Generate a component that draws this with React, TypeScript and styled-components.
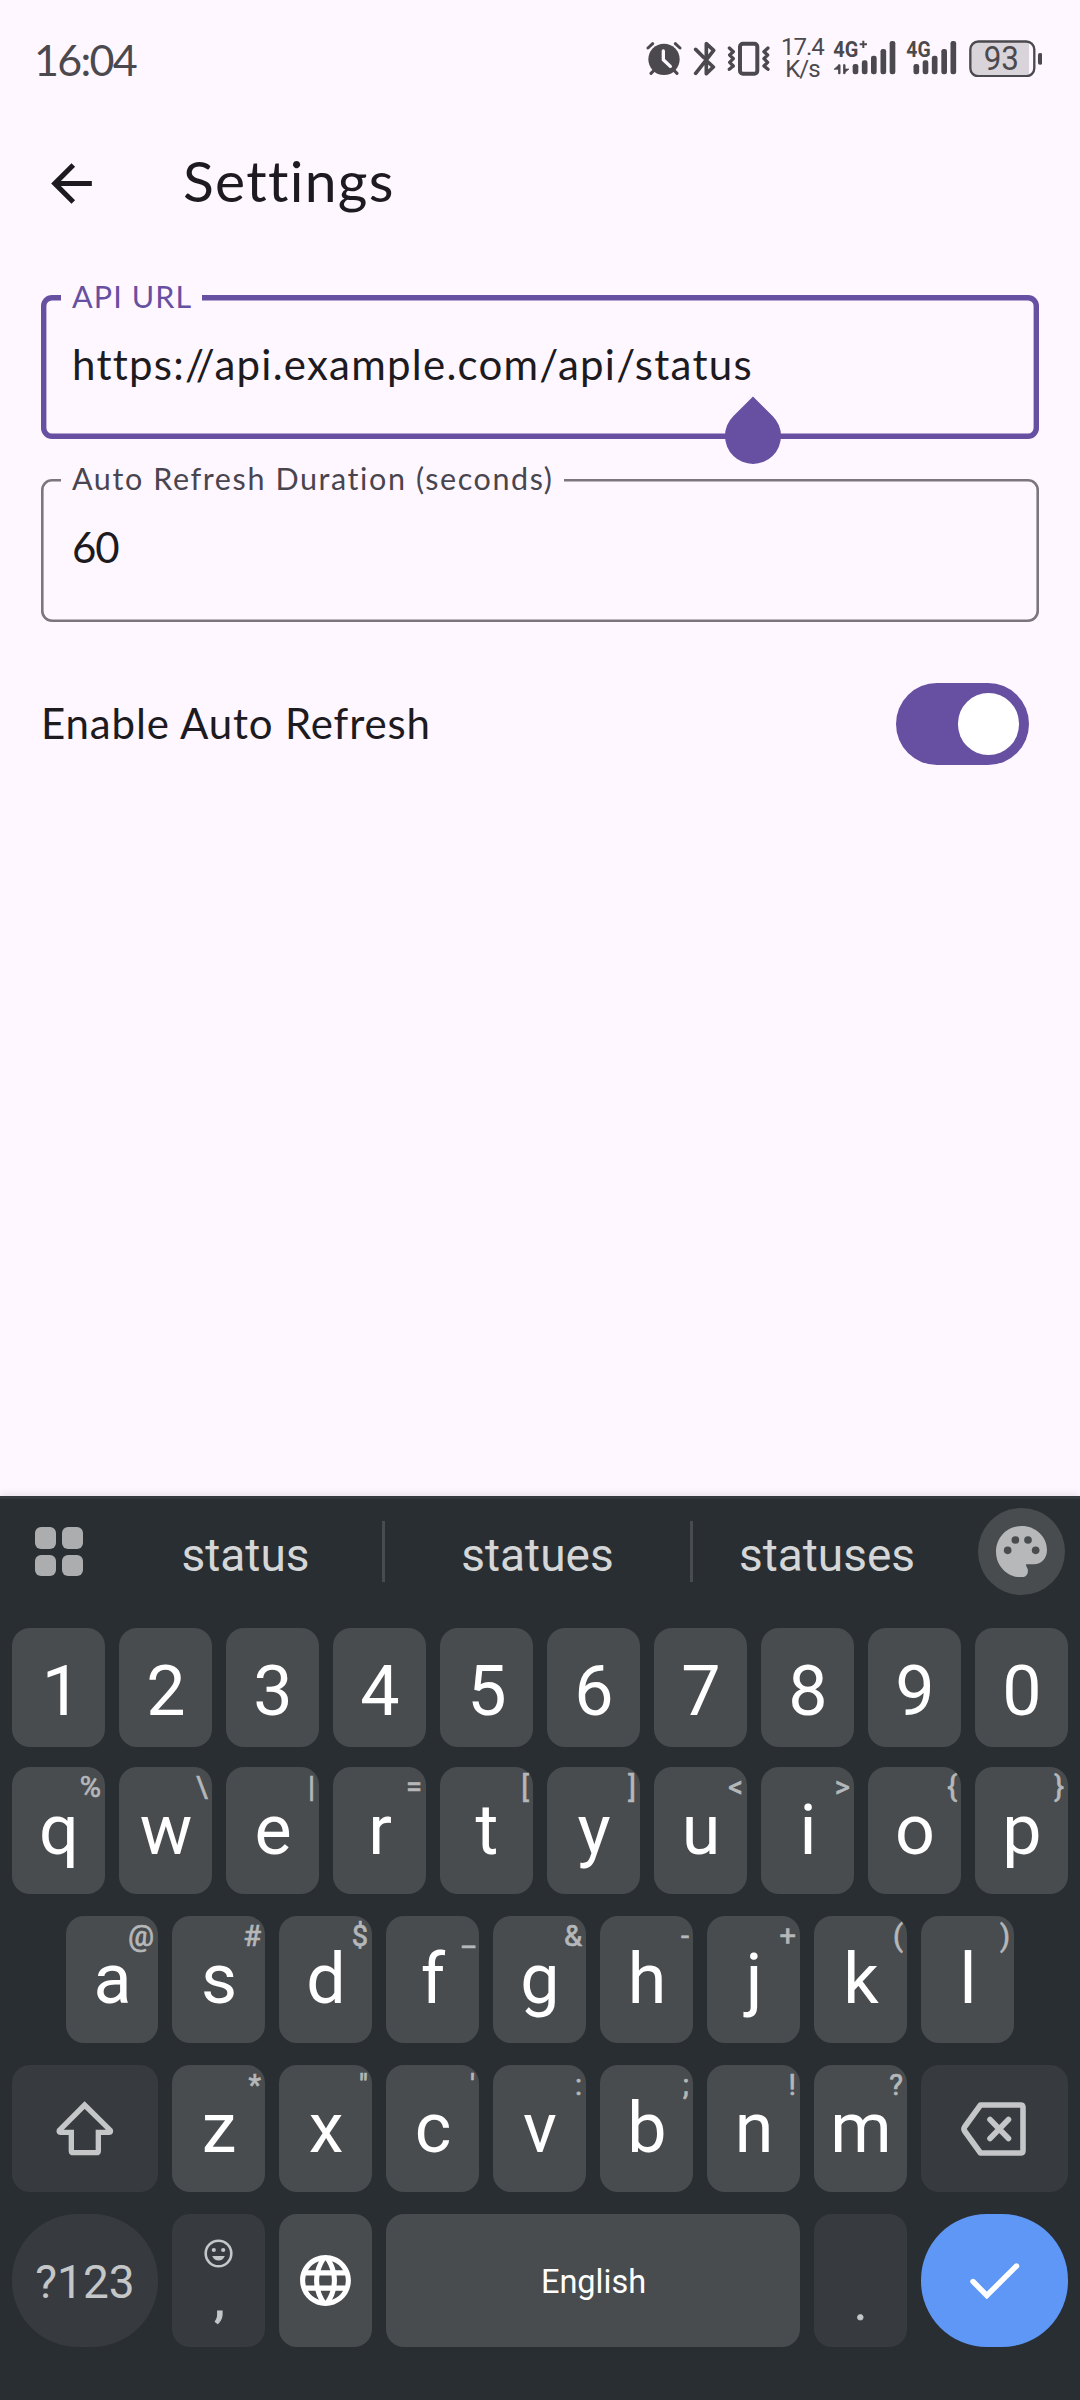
import React from 'react';
import styled, { createGlobalStyle, css } from 'styled-components';
import { MdLanguage } from 'react-icons/md';

const color = {
  surface: '#fef7ff',
  ink: '#1d1b20',
  muted: '#49454f',
  outline: '#7a757f',
  primary: '#6750a1',
  status: '#4b494d',
  board: '#292e32',
  key: '#484c4f',
  keyDark: '#373b3f',
  keyIcon: '#c4c6c8',
  enter: '#5f97f6',
};

const GlobalStyle = createGlobalStyle`
  *, *::before, *::after { box-sizing: border-box; }
  body { margin: 0; background: ${color.surface}; }
`;

const Screen = styled.div`
  display: flex;
  flex-direction: column;
  width: 1080px;
  height: 2400px;
  overflow: hidden;
  background: ${color.surface};
  font-family: Lato, 'Noto Sans', sans-serif;
  color: ${color.ink};
`;

/* ---------- status bar ---------- */

const StatusBar = styled.header`
  display: flex;
  align-items: center;
  justify-content: space-between;
  height: 117px;
  padding: 0 38px 0 34px;
  color: ${color.status};
`;

const Clock = styled.time`
  padding-top: 1px;
  font-size: 43px;
  line-height: 1;
  letter-spacing: -1.7px;
`;

const StatusIcons = styled.div`
  display: flex;
  align-items: center;
`;

const StatusGlyph = styled.svg<{ $gap?: number }>`
  display: block;
  flex: none;
  margin-left: ${(p) => p.$gap ?? 0}px;
  fill: none;
  stroke: currentColor;
  stroke-linecap: round;
  stroke-linejoin: round;

  text {
    font-family: Roboto, sans-serif;
    fill: currentColor;
    stroke: none;
  }
`;

const NetSpeed = styled.div`
  display: flex;
  flex-direction: column;
  align-items: center;
  width: 41px;
  margin-left: 12px;
  font-family: Roboto, sans-serif;
  font-size: 24px;
  line-height: 21.5px;
  letter-spacing: -1px;
  white-space: nowrap;
`;

/* ---------- app bar ---------- */

const AppBar = styled.div`
  display: flex;
  align-items: center;
  height: 133px;
  padding-left: 41px;
`;

const BackIcon = styled.svg`
  display: block;
  width: 61px;
  height: 61px;
  fill: ${color.ink};
`;

const Title = styled.h1`
  margin: 0 0 6px 81px;
  font-size: 57px;
  font-weight: 400;
  line-height: 1;
  letter-spacing: 1.3px;
`;

/* ---------- form ---------- */

const Form = styled.main`
  display: flex;
  flex-direction: column;
  flex: 1;
  padding: 45px 41px 0;
`;

const Field = styled.div<{ $focused?: boolean }>`
  position: relative;
  height: ${(p) => (p.$focused ? 144 : 143)}px;
  padding: 0 31px;
  border-radius: 11px;
  box-shadow: inset 0 0 0
    ${(p) => (p.$focused ? `5.4px ${color.primary}` : `2.6px ${color.outline}`)};

  & + & {
    margin-top: 40px;
  }
`;

const FieldLabel = styled.label<{ $focused?: boolean; $width: number }>`
  position: absolute;
  top: ${(p) => (p.$focused ? -14 : -16)}px;
  left: 20px;
  width: ${(p) => p.$width}px;
  padding-left: 11px;
  background: ${color.surface};
  color: ${(p) => (p.$focused ? color.primary : color.muted)};
  font-size: 30.5px;
  line-height: 30px;
  letter-spacing: ${(p) => (p.$focused ? 1.1 : 1.6)}px;
  white-space: nowrap;
`;

const FieldValue = styled.div<{ $height: number; $tracking: number }>`
  font-size: 42px;
  line-height: ${(p) => p.$height}px;
  letter-spacing: ${(p) => p.$tracking}px;
  white-space: nowrap;
`;

const CursorHandle = styled.div`
  position: absolute;
  top: 112.5px;
  left: 684px;
  width: 56px;
  height: 56px;
  border-radius: 0 50% 50% 50%;
  background: ${color.primary};
  transform: rotate(45deg);
`;

const SwitchRow = styled.div`
  display: flex;
  align-items: center;
  justify-content: space-between;
  height: 82px;
  margin-top: 61px;
  padding-right: 10px;
`;

const SwitchLabel = styled.span`
  margin-bottom: 2px;
  font-size: 42px;
  line-height: 1;
  letter-spacing: 0.85px;
`;

const Switch = styled.div`
  display: flex;
  align-items: center;
  justify-content: flex-end;
  width: 133px;
  height: 82px;
  padding-right: 10px;
  border-radius: 41px;
  background: ${color.primary};
`;

const Thumb = styled.div`
  width: 61.5px;
  height: 61.5px;
  border-radius: 50%;
  background: #fff;
`;

/* ---------- keyboard ---------- */

const Keyboard = styled.section`
  position: relative;
  display: flex;
  flex-direction: column;
  height: 904px;
  padding: 9px 12px 0;
  border-top: 3px solid #353a3f;
  background: ${color.board};
  box-shadow: 0 -1px 8px rgba(60, 60, 70, 0.14);
  font-family: Roboto, sans-serif;
  color: #fff;
`;

const Suggestions = styled.div`
  display: flex;
  align-items: center;
  height: 87px;
  margin-bottom: 33px;
  padding: 0 3px 0 23px;
`;

const GridIcon = styled.div`
  display: grid;
  grid-template-columns: 21px 21px;
  gap: 6px;
  margin-right: 26px;
`;

const GridDot = styled.i`
  height: 21.5px;
  border-radius: 6px;
  background: #abadaf;
`;

const Suggestion = styled.div<{ $width: number }>`
  width: ${(p) => p.$width}px;
  padding-top: 7px;
  font-size: 46px;
  line-height: 1;
  text-align: center;
  color: #d4d6d7;
`;

const Divider = styled.div`
  width: 3px;
  height: 61px;
  background: #484b4f;
`;

const PaletteButton = styled.div`
  display: flex;
  align-items: center;
  justify-content: center;
  width: 87px;
  height: 87px;
  margin-left: auto;
  border-radius: 50%;
  background: #494c4e;
`;

const KeyRow = styled.div<{ $height: number; $indent?: number }>`
  display: flex;
  gap: 14px;
  height: ${(p) => p.$height}px;
  margin-bottom: ${(p) => (p.$height === 119 ? 20 : 22)}px;
  padding-left: ${(p) => p.$indent ?? 0}px;
`;

const Key = styled.div<{
  $width?: number;
  $tone?: 'dark' | 'enter';
  $round?: boolean;
}>`
  position: relative;
  display: flex;
  flex: none;
  align-items: center;
  justify-content: center;
  width: ${(p) => p.$width ?? 93}px;
  height: 100%;
  border-radius: ${(p) => (p.$round ? 66 : 18)}px;
  background: ${color.key};
  ${(p) =>
    p.$tone === 'dark' &&
    css`
      background: ${color.keyDark};
      color: ${color.keyIcon};
    `}
  ${(p) =>
    p.$tone === 'enter' &&
    css`
      background: ${color.enter};
    `}
`;

const KeyCap = styled.span<{ $size?: number; $drop?: number; $nudge?: number }>`
  padding-top: ${(p) => Math.max(0, p.$drop ?? 0)}px;
  padding-bottom: ${(p) => Math.max(0, -(p.$drop ?? 0))}px;
  padding-left: ${(p) => p.$nudge ?? 0}px;
  font-size: ${(p) => p.$size ?? 70}px;
  line-height: 1;
`;

const Hint = styled.span`
  position: absolute;
  top: 5px;
  right: 4px;
  font-size: 29px;
  line-height: 30px;
  color: #b5b7b9;
  -webkit-text-stroke: 0.7px #b5b7b9;
`;

const CommaKey = styled(Key)`
  flex-direction: column;
  justify-content: flex-start;
  padding-top: 25px;
`;

const Comma = styled.span`
  margin-top: 6px;
  padding-left: 2px;
  font-size: 50px;
  line-height: 1;
  -webkit-text-stroke: 1px ${color.keyIcon};
`;

const PeriodDot = styled.span`
  padding-top: 44px;
  font-size: 50px;
  line-height: 1;
  -webkit-text-stroke: 0.6px ${color.keyIcon};
`;

const LetterKey = ({ k, width }: { k: string; width?: number }) => (
  <Key $width={width}>
    <KeyCap $drop={-2} $nudge={1}>{k[0]}</KeyCap>
    <Hint>{k[1]}</Hint>
  </Key>
);

const digits = '1234567890'.split('');
const topRow = ['q%', 'w\\', 'e|', 'r=', 't[', 'y]', 'u<', 'i>', 'o{', 'p}'];
const homeRow = ['a@', 's#', 'd$', 'f_', 'g&', 'h-', 'j+', 'k(', 'l)'];
const bottomRow = ['z*', 'x"', "c'", 'v:', 'b;', 'n!', 'm?'];

const AlarmIcon = () => (
  <StatusGlyph width="36" height="36.7" viewBox="75 60 108 110" strokeWidth="9">
    <circle cx="129" cy="118" r="47" fill="currentColor" stroke="none" />
    <path d="M81 84L95 71M163 71L177 84M90 160L99 151M159 151L168 160" />
    <path d="M127 93V119L148 139" stroke={color.surface} strokeWidth="10" />
  </StatusGlyph>
);

const BluetoothIcon = () => (
  <StatusGlyph $gap={11} width="23" height="36.7" viewBox="217 60 69 110" strokeWidth="11">
    <path d="M225 88L250 113M225 160L279 91L257 71V107M262 126L278 141L257 161V131" />
  </StatusGlyph>
);

const VibrateIcon = () => (
  <StatusGlyph $gap={10.5} width="43.3" height="36.7" viewBox="319 60 130 110" strokeWidth="10">
    <rect x="358" y="71" width="52" height="90" rx="9" strokeWidth="12" />
    <path d="M326 84L338 95L327 105L338 116L327 127L338 138L326 148M442 84L430 95L441 105L430 116L441 127L430 138L442 148" />
  </StatusGlyph>
);

const signalBars = [
  [0, 132],
  [27.5, 121],
  [55, 107],
  [83.5, 87],
  [111, 63],
];

const Bars = ({ x }: { x: number }) => (
  <g fill="currentColor" stroke="none">
    {signalBars.map(([dx, top]) => (
      <rect key={dx} x={x + dx} y={top} width="17" height={163 - top} rx="7" />
    ))}
  </g>
);

const SignalPlus = () => (
  <StatusGlyph $gap={10} width="63" height="36.7" viewBox="637 60 189 110" overflow="visible">
    <text x="638" y="110" fontSize="67" fontWeight="700" textLength="75" lengthAdjust="spacingAndGlyphs">4G</text>
    <path d="M717 73H739M728 62V84" strokeWidth="6" strokeLinecap="butt" />
    <path d="M655 161V134L640 148H655M670 133V160L685 147H670" strokeWidth="2" fill="currentColor" />
    <path d="M656 136V159M671 136V159" strokeWidth="7" />
    <Bars x={696} />
  </StatusGlyph>
);

const Signal = () => (
  <StatusGlyph $gap={10.5} width="51" height="36.7" viewBox="860 60 153 110" overflow="visible">
    <text x="861" y="110" fontSize="67" fontWeight="700" textLength="73" lengthAdjust="spacingAndGlyphs">4G</text>
    <Bars x={882.5} />
  </StatusGlyph>
);

const Battery = () => (
  <StatusGlyph $gap={11.3} width="73.3" height="37.4" viewBox="1046 56 220 112">
    <path d="M1066 60H1226V164H1066Q1051 164 1051 146V78Q1051 60 1066 60Z" fill="#d8d4da" stroke="none" />
    <rect x="1050" y="60.5" width="192" height="104" rx="24" strokeWidth="7" />
    <rect x="1253" y="95" width="13" height="35" rx="6" fill="currentColor" stroke="none" />
    <text x="1090" y="147" fontSize="98" textLength="106" lengthAdjust="spacingAndGlyphs">93</text>
  </StatusGlyph>
);

const PaletteIcon = () => (
  <svg width="51" height="51.3" viewBox="108 108 153 154">
    <path
      fill="#b6b8ba"
      d="M185 108C142 108 108 142 108 185S142 262 185 262C197 262 204 253 204 242C204 234 198 232 198 223H222C244 223 261 205 261 180C261 140 227 108 185 108Z"
    />
    <g fill="#494c4e">
      <circle cx="166" cy="150" r="11.5" />
      <circle cx="204" cy="150" r="11.5" />
      <circle cx="143" cy="181" r="11.5" />
      <circle cx="227" cy="181" r="11.5" />
    </g>
  </svg>
);

const ShiftIcon = () => (
  <svg width="58" height="55" viewBox="77 62 174 165" fill="none" stroke={color.keyIcon} strokeWidth="16">
    <path d="M163 74L87 150Q85 156 90 156H123V211Q123 217 129 217H198Q204 217 204 211V156H237Q242 156 240 150Z" />
  </svg>
);

const BackspaceIcon = () => (
  <svg width="68" height="54" viewBox="0 0 68 54" fill="none" stroke={color.keyIcon} strokeWidth="5.6" strokeLinejoin="round">
    <path d="M19.5 3H59.5Q62 3 62 5.5V48.5Q62 51 59.5 51H19.5L3.6 29Q2.3 27 3.6 25Z" />
    <path d="M29 17.5L47.5 36.5M47.5 17.5L29 36.5" strokeLinecap="round" />
  </svg>
);

const SmileIcon = () => (
  <svg width="29" height="29" viewBox="0 0 29 29" fill={color.keyIcon}>
    <circle cx="14.5" cy="14.5" r="12.8" fill="none" stroke={color.keyIcon} strokeWidth="2.6" />
    <circle cx="9.8" cy="11" r="2.1" />
    <circle cx="19.2" cy="11" r="2.1" />
    <path d="M8.2 17H20.8Q18.8 21.6 14.5 21.6T8.2 17Z" />
  </svg>
);

const CheckIcon = () => (
  <svg width="50" height="36" viewBox="0 0 50 36" fill="none" stroke="#fff" strokeWidth="5.4" strokeLinecap="round">
    <path d="M3 18.5L16.8 32.5L46.5 3" />
  </svg>
);

export default function App() {
  return (
    <Screen>
      <GlobalStyle />
      <StatusBar>
        <Clock>16:04</Clock>
        <StatusIcons>
          <AlarmIcon />
          <BluetoothIcon />
          <VibrateIcon />
          <NetSpeed>
            <span>17.4</span>
            <span>K/s</span>
          </NetSpeed>
          <SignalPlus />
          <Signal />
          <Battery />
        </StatusIcons>
      </StatusBar>

      <AppBar>
        <BackIcon viewBox="0 0 24 24">
          <path d="M20 11H7.83l5.59-5.59L12 4l-8 8 8 8 1.41-1.41L7.83 13H20v-2z" />
        </BackIcon>
        <Title>Settings</Title>
      </AppBar>

      <Form>
        <Field $focused>
          <FieldLabel $focused $width={141}>API URL</FieldLabel>
          <FieldValue $height={138} $tracking={1.25}>https://api.example.com/api/status</FieldValue>
          <CursorHandle />
        </Field>
        <Field>
          <FieldLabel $width={503}>Auto Refresh Duration (seconds)</FieldLabel>
          <FieldValue $height={136} $tracking={-1}>60</FieldValue>
        </Field>
        <SwitchRow>
          <SwitchLabel>Enable Auto Refresh</SwitchLabel>
          <Switch>
            <Thumb />
          </Switch>
        </SwitchRow>
      </Form>

      <Keyboard>
        <Suggestions>
          <GridIcon>
            <GridDot />
            <GridDot />
            <GridDot />
            <GridDot />
          </GridIcon>
          <Suggestion $width={273}>status</Suggestion>
          <Divider />
          <Suggestion $width={305}>statues</Suggestion>
          <Divider />
          <Suggestion $width={268}>statuses</Suggestion>
          <PaletteButton>
            <PaletteIcon />
          </PaletteButton>
        </Suggestions>

        <KeyRow $height={119}>
          {digits.map((d) => (
            <Key key={d}>
              <KeyCap $drop={6} $nudge={d === '1' ? 6 : 1}>{d}</KeyCap>
            </Key>
          ))}
        </KeyRow>
        <KeyRow $height={127}>
          {topRow.map((k) => (
            <LetterKey key={k} k={k} />
          ))}
        </KeyRow>
        <KeyRow $height={127} $indent={54}>
          {homeRow.map((k, i) => (
            <LetterKey key={k} k={k} width={i === 0 ? 92 : 93} />
          ))}
        </KeyRow>
        <KeyRow $height={127}>
          <Key $width={146} $tone="dark">
            <ShiftIcon />
          </Key>
          {bottomRow.map((k) => (
            <LetterKey key={k} k={k} />
          ))}
          <Key $width={147} $tone="dark">
            <BackspaceIcon />
          </Key>
        </KeyRow>
        <KeyRow $height={133}>
          <Key $width={146} $tone="dark" $round>
            <KeyCap $size={46} $drop={3}>?123</KeyCap>
          </Key>
          <CommaKey $tone="dark">
            <SmileIcon />
            <Comma>,</Comma>
          </CommaKey>
          <Key>
            <MdLanguage size={61} />
          </Key>
          <Key $width={414}>
            <KeyCap $size={32.5} $drop={3} $nudge={1}>English</KeyCap>
          </Key>
          <Key $tone="dark">
            <PeriodDot>.</PeriodDot>
          </Key>
          <Key $width={147} $tone="enter" $round>
            <CheckIcon />
          </Key>
        </KeyRow>
      </Keyboard>
    </Screen>
  );
}
